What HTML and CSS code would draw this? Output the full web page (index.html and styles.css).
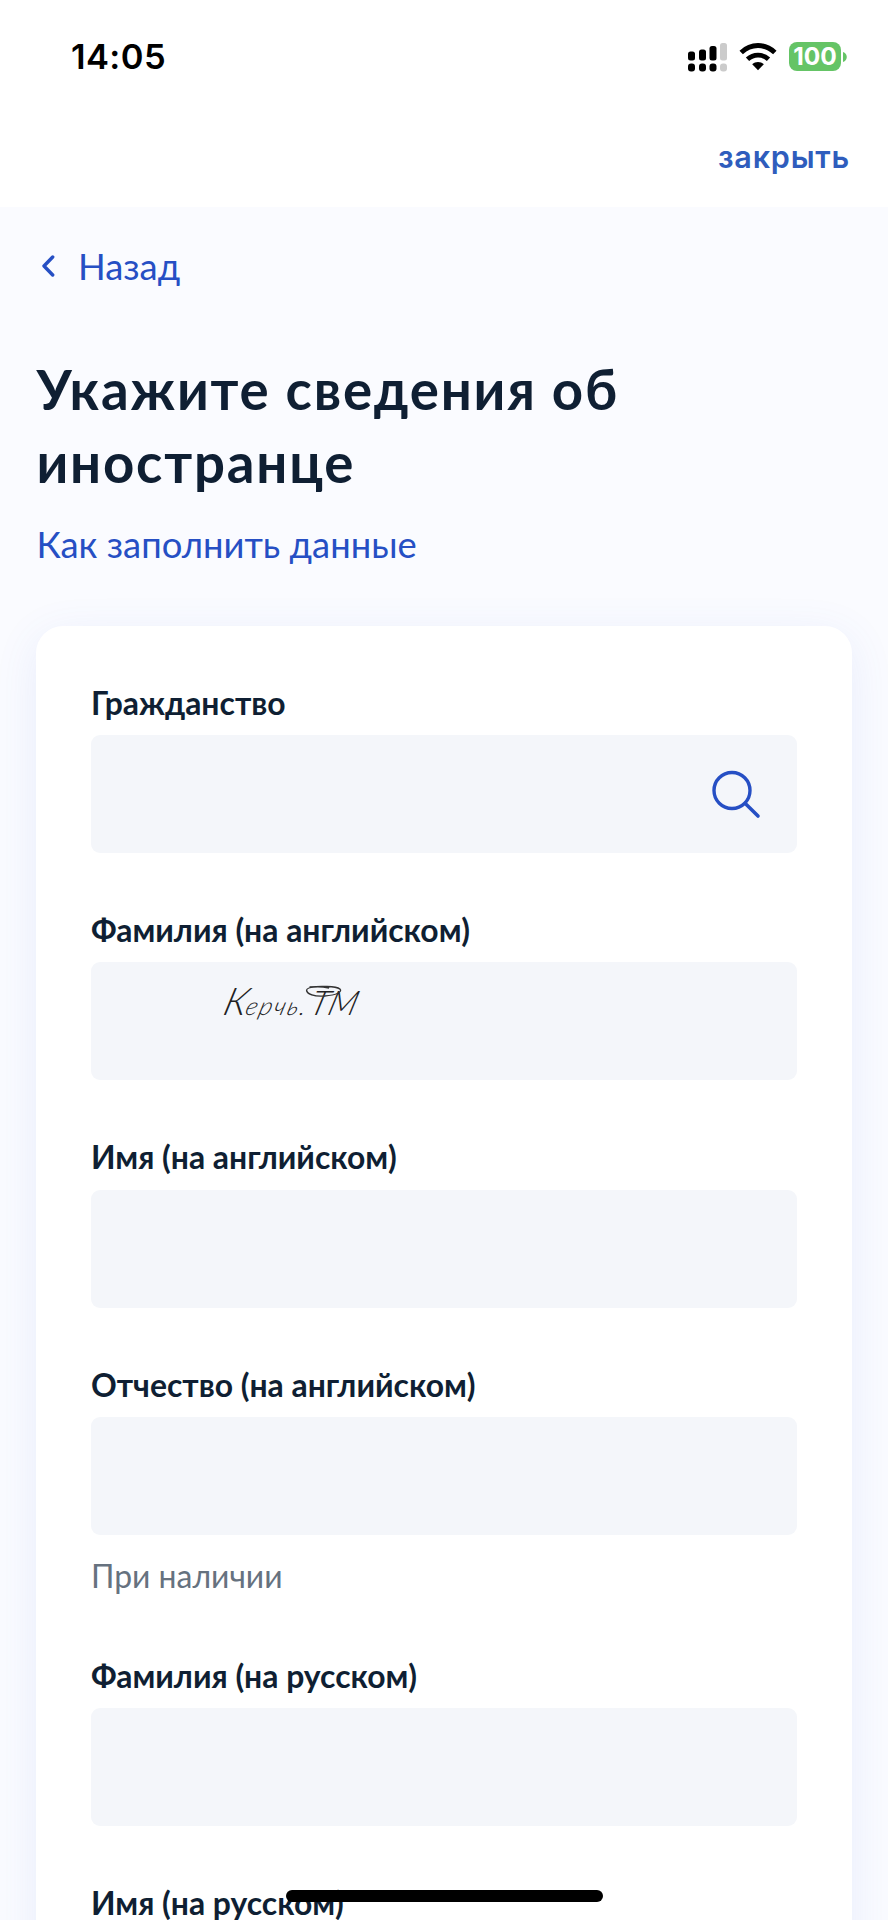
FILE: index.html
```html
<!DOCTYPE html>
<html lang="ru">
<head>
  <meta charset="UTF-8">
  <meta name="viewport" content="width=device-width, initial-scale=1.0">
  <title>Сведения об иностранце</title>
  <link rel="stylesheet" href="styles.css">
</head>
<body>
  <header class="top">
    <div class="status">
      <span class="time">14:05</span>
      <div class="status-icons">
        <svg class="signal" width="39" height="30" viewBox="0 0 39 30">
          <rect x="0" y="9.500" width="7" height="9" rx="2.500"/>
          <rect x="11" y="7.500" width="7" height="11" rx="2.500"/>
          <rect x="21.500" y="4" width="7" height="14.500" rx="2.500"/>
          <rect class="off" x="32" y="1" width="7" height="17.500" rx="2.500"/>
          <rect x="0" y="21.500" width="7" height="8" rx="3"/>
          <rect x="11" y="21.500" width="7" height="8" rx="3"/>
          <rect x="21.500" y="21.500" width="7" height="8" rx="3"/>
          <rect class="off" x="32" y="21.500" width="7" height="8" rx="3"/>
        </svg>
        <svg class="wifi" width="38" height="28" viewBox="0 0 38 28">
          <path d="M2.200 9.500C12 .2 26 .2 35.800 9.500" fill="none" stroke="#000" stroke-width="5"/>
          <path d="M8.500 16.300C14.500 10.700 23.500 10.700 29.500 16.300" fill="none" stroke="#000" stroke-width="4.800"/>
          <path d="M13.200 21.300C16.500 18.200 21.500 18.200 24.800 21.300L19 27.200Z"/>
        </svg>
        <div class="battery">
          <span class="battery-level">100</span>
          <svg width="4" height="10" viewBox="0 0 4 10"><path d="M0 0C5 1.500 5 8.500 0 10Z" fill="#65c466"/></svg>
        </div>
      </div>
    </div>
    <a class="close">закрыть</a>
  </header>

  <main class="page">
    <a class="back">
      <svg width="14" height="22" viewBox="0 0 14 22"><path d="M11.700 2L3 11L11.700 20" fill="none" stroke="#264fc4" stroke-width="3.400" stroke-linecap="round" stroke-linejoin="round"/></svg>
      Назад
    </a>
    <h1>Укажите сведения об иностранце</h1>
    <a class="help">Как заполнить данные</a>

    <form class="card">
      <div class="field">
        <label for="country">Гражданство</label>
        <div class="control">
          <input type="text" id="country">
          <svg class="search" width="50" height="50" viewBox="0 0 50 50">
            <circle cx="21" cy="20.500" r="18" fill="none" stroke="#264fc4" stroke-width="3.400"/>
            <path d="M34.300 33.500L47 46" stroke="#264fc4" stroke-width="3.600" stroke-linecap="round"/>
          </svg>
        </div>
      </div>
      <div class="field">
        <label for="lastEn">Фамилия (на английском)</label>
        <div class="control">
          <input type="text" id="lastEn">
          <div class="sign">
            <span class="sign-k">К</span><span class="sign-name">ерчь.</span><span class="sign-tm">ТМ</span>
            <svg class="sign-loop" width="40" height="14" viewBox="0 0 40 14"><path d="M24 3C12 1 2 2 2 5C3 9 12 12 22 11C33 10 39 7 35 4C30 1 14 1 4 2" fill="none" stroke="#333" stroke-width="1.300"/></svg>
          </div>
        </div>
      </div>
      <div class="field">
        <label for="firstEn">Имя (на английском)</label>
        <div class="control"><input type="text" id="firstEn"></div>
      </div>
      <div class="field">
        <label for="middleEn">Отчество (на английском)</label>
        <div class="control"><input type="text" id="middleEn"></div>
        <p class="hint">При наличии</p>
      </div>
      <div class="field">
        <label for="lastRu">Фамилия (на русском)</label>
        <div class="control"><input type="text" id="lastRu"></div>
      </div>
      <div class="field">
        <label for="firstRu">Имя (на русском)</label>
      </div>
    </form>
  </main>

  <div class="home-bar"></div>
</body>
</html>
```
FILE: styles.css
```css
* {
  box-sizing: border-box;
}
body {
  margin: 0;
  height: 1920px;
  overflow: hidden;
  position: relative;
  font-family: Lato, sans-serif;
  color: #0f1f33;
  background-color: #fafbff;
}

/* status bar and close link */
.top {
  height: 207px;
  padding: 36px 38px 0 71px;
  background-color: #fff;
  font-family: Inter, sans-serif;
}
.status {
  display: flex;
  align-items: center;
  justify-content: space-between;
  height: 41px;
  padding-right: 3px;
}
.time {
  font-size: 34.5px;
  font-weight: 600;
  letter-spacing: 0.4px;
  color: #000;
}
.status-icons {
  display: flex;
  align-items: center;
}
.signal {
  margin-right: 12px;
}
.signal .off {
  fill: #cbcbcb;
}
.wifi {
  margin-right: 12px;
}
.battery {
  display: flex;
  align-items: center;
  gap: 2px;
}
.battery-level {
  width: 52px;
  height: 29px;
  border-radius: 8px;
  background-color: #65c466;
  color: #fff;
  font-size: 24.5px;
  font-weight: 700;
  line-height: 29px;
  text-align: center;
}
.close {
  display: block;
  margin-top: 60px;
  text-align: right;
  font-size: 30.5px;
  line-height: 40px;
  font-weight: 600;
  letter-spacing: 0.8px;
  color: #2f5dbd;
}

/* page content */
.page {
  padding: 32px 36.4px 0;
}
.back {
  display: flex;
  align-items: center;
  gap: 23px;
  padding-left: 4.5px;
  font-size: 36.4px;
  line-height: 54.6px;
  color: #264fc4;
}
h1 {
  margin: 59.2px 0 18.4px;
  font-size: 54.6px;
  line-height: 72.9px;
  font-weight: 700;
  letter-spacing: 1.8px;
}
.help {
  display: block;
  font-size: 36.4px;
  line-height: 54.6px;
  color: #264fc4;
}
.card {
  display: flex;
  flex-direction: column;
  gap: 54.6px;
  margin-top: 54.1px;
  padding: 54.4px 54.6px;
  background-color: #fff;
  border-radius: 27px;
  box-shadow: 0 10px 44px rgba(80, 110, 220, 0.1);
}
.field label {
  display: block;
  padding-top: 0.6px;
  margin-bottom: 8.6px;
  font-size: 31.9px;
  line-height: 45.5px;
  font-weight: 700;
}
.control {
  position: relative;
  height: 118.1px;
}
.control input {
  display: block;
  width: 100%;
  height: 100%;
  padding: 0 36px;
  border: none;
  border-radius: 9px;
  background-color: #f4f6fa;
  font: inherit;
}
.search {
  position: absolute;
  right: 36px;
  top: 35px;
}
.hint {
  margin: 18.8px 0 -0.8px;
  font-size: 31.9px;
  line-height: 45.5px;
  color: #66727f;
}

/* handwritten mark over the field */
.sign {
  position: absolute;
  left: 134px;
  top: 18px;
  display: flex;
  align-items: baseline;
  font-weight: 300;
  font-style: italic;
  line-height: 40px;
  color: #222;
  transform: skewX(-16deg);
}
.sign-k {
  font-size: 38px;
}
.sign-name {
  font-size: 25px;
  letter-spacing: 1.8px;
}
.sign-tm {
  font-size: 34px;
  margin-left: 2px;
}
.sign-loop {
  position: absolute;
  right: 17px;
  top: 5px;
}

.home-bar {
  position: absolute;
  left: 286px;
  top: 1890px;
  width: 317px;
  height: 12px;
  border-radius: 6px;
  background-color: #000;
}
```
